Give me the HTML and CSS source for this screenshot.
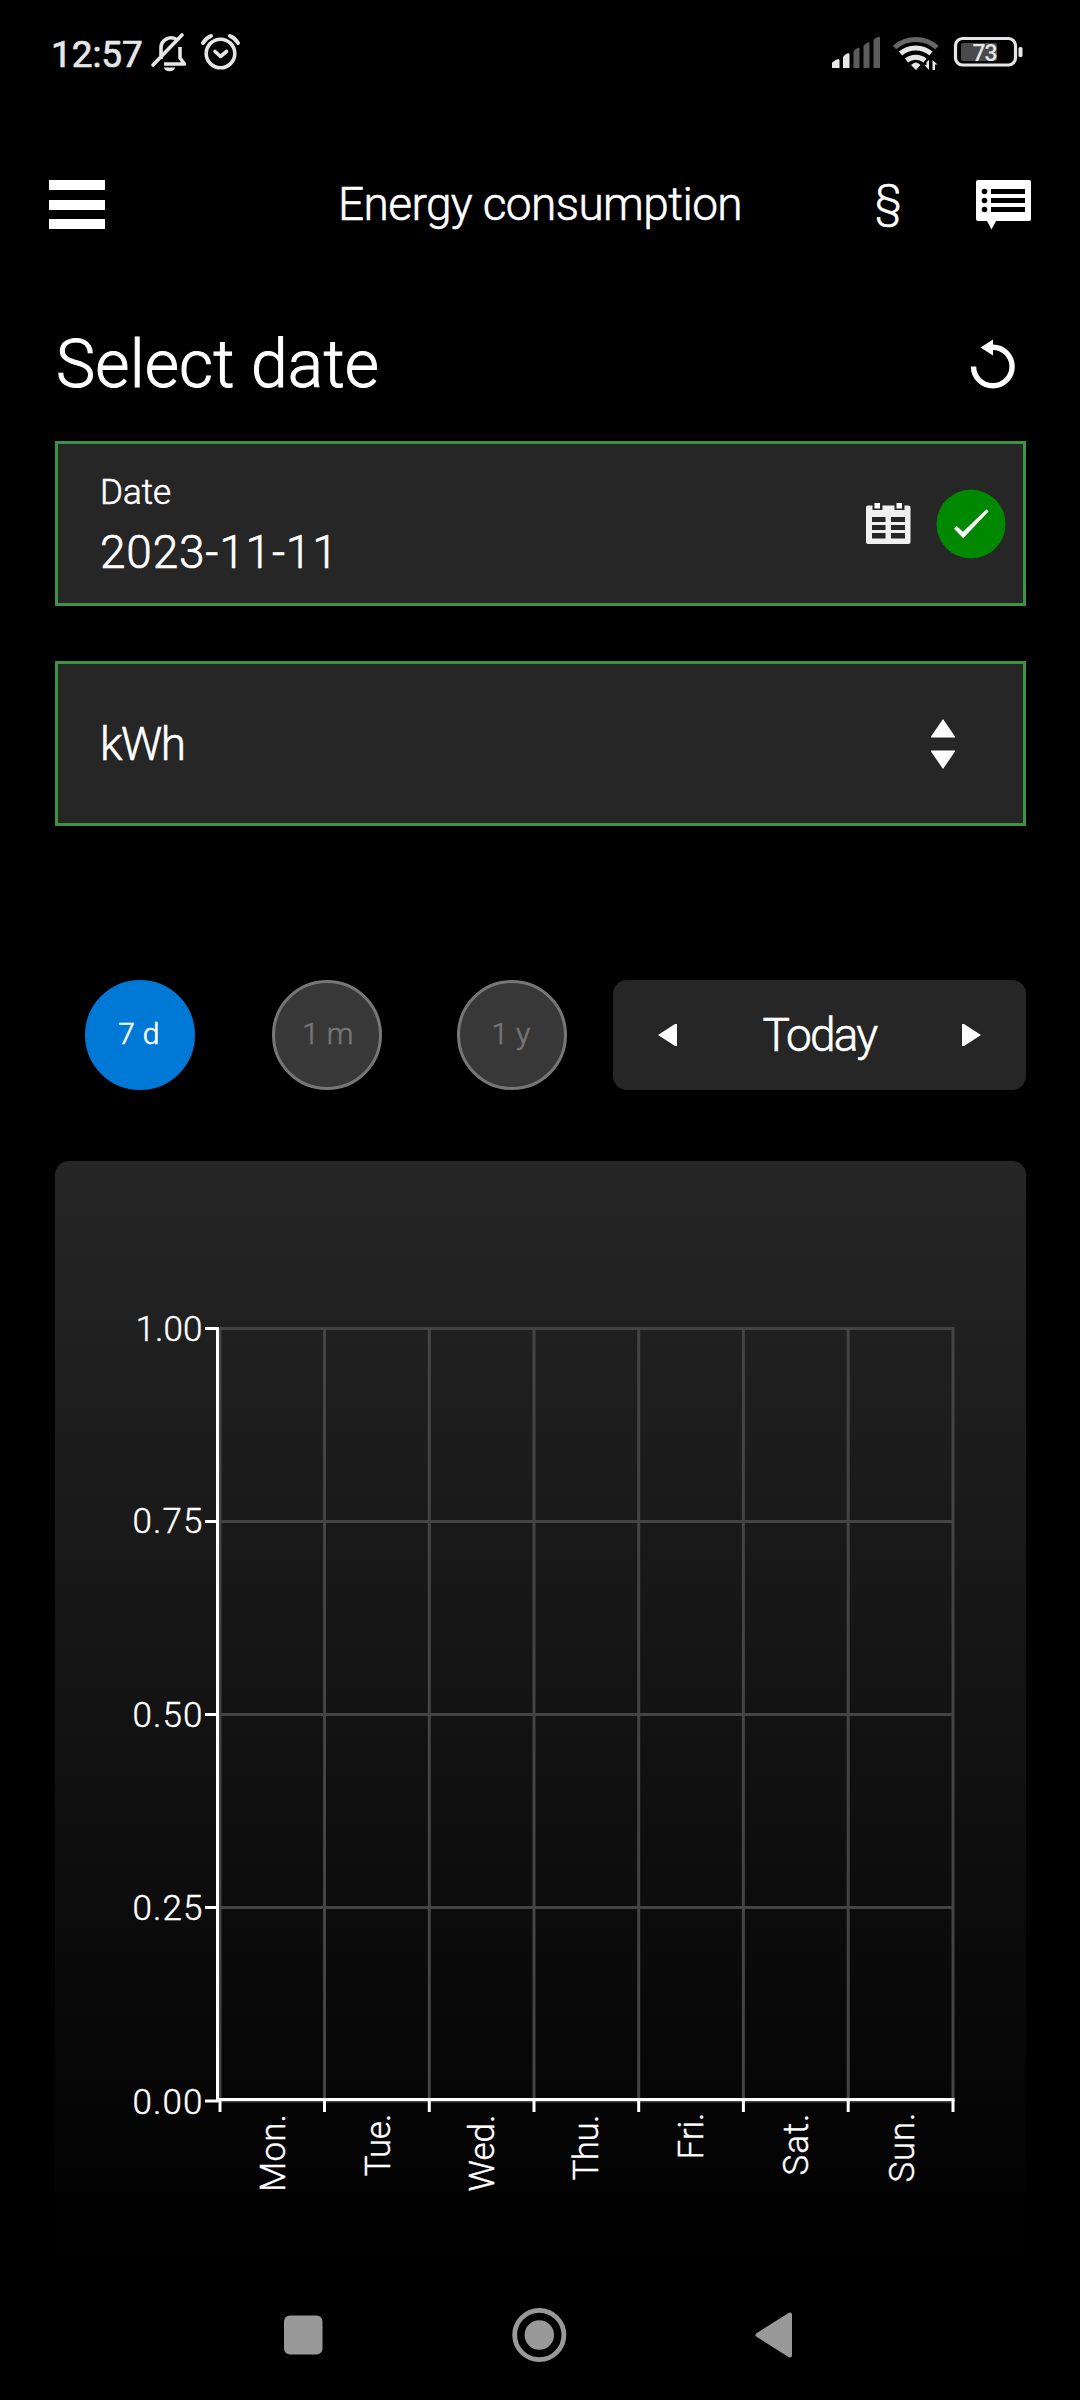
FILE: index.html
```
<!DOCTYPE html>
<html lang="en">
<head>
    <meta charset="UTF-8">
    <meta name="viewport" content="width=device-width, initial-scale=1.0">
    <title>Energy consumption</title>
    <link rel="stylesheet" href="styles.css">
</head>
<body>
    <div class="screen">
        <!-- status bar -->
        <div class="status-bar">
            <span class="clock">12:57</span>
            <svg class="status-left" width="92" height="44" viewBox="150 30 92 44" fill="none" stroke="#e6e6e6" stroke-width="3.6">
                <path d="M161 59V48a10 10 0 0 1 15.500-8.500M180 47v11l4.500 6H164" stroke-linejoin="round"/>
                <path d="M153 65L182 35" stroke-linecap="round"/>
                <path d="M164 67.500h11a5.500 3.800 0 0 1-11 0z" fill="#e6e6e6" stroke="none"/>
                <circle cx="220.500" cy="53.500" r="14.300"/>
                <path d="M203 43q3-5 8-7M238 43q-3-5-8-7" stroke-width="4" stroke-linecap="round"/>
                <path d="M215 51.500l5.500 5 6-5" stroke-linecap="round" stroke-linejoin="round"/>
            </svg>
            <svg class="status-right" width="194" height="44" viewBox="830 30 194 44">
                <path d="M832 63q0-1 4.500-3.500 3-1.500 3 1V68h-7.500zM843 57q1-2 4-3.500 2.500-1 2.500 1V68H843z" fill="#e6e6e6"/>
                <path d="M853.500 52q1-3 4-4 2-1 2 1V68h-6zM863.500 46q1-2 4-3.500 2-1 2 1V68h-6zM873.500 40q1-2 4.500-3 2-1 2 1V68h-6.500z" fill="#5c5c5c"/>
                <g fill="none" stroke="#e6e6e6" stroke-width="5">
                    <path d="M894.500 47.500a32 32 0 0 1 42.500 0" stroke="#666"/>
                    <path d="M900.500 53.500a24 24 0 0 1 30.500 0"/>
                    <path d="M906.500 60.500a15 15 0 0 1 18.500 0"/>
                </g>
                <path d="M911 65q5-5 9.500 0l-4.500 5zM929 60v10l-4.500-5h2v-3zM932.500 70V60l5 4.500h-2.500V70z" fill="#e6e6e6"/>
                <rect x="955.500" y="38.500" width="60" height="26.500" rx="7" fill="none" stroke="#e6e6e6" stroke-width="3.200"/>
                <rect x="1018.500" y="47" width="4" height="10" rx="1.500" fill="#e6e6e6"/>
                <rect x="961" y="43" width="36" height="18" rx="2" fill="#4a4a4a"/>
                <text class="battery" x="972.500" y="60.700" textLength="25">73</text>
            </svg>
        </div>

        <!-- app header -->
        <header class="header">
            <svg class="menu" width="56" height="50" viewBox="0 0 56 50" fill="#fff">
                <path d="M0 0h56v10H0zM0 20h56v10H0zM0 39h56v10H0z"/>
            </svg>
            <h1 class="title">Energy consumption</h1>
            <span class="legal">§</span>
            <svg class="chat" width="56" height="50" viewBox="976 180 56 50">
                <path d="M978 180h51q2 0 2 2v37q0 2-2 2H996l-4.500 8.500-4.500-8.500h-9q-2 0-2-2v-37q0-2 2-2z" fill="#fff"/>
                <g fill="#000">
                    <circle cx="984.500" cy="191.500" r="2.800"/>
                    <circle cx="984.500" cy="200.500" r="2.800"/>
                    <circle cx="984.500" cy="209.500" r="2.800"/>
                    <path d="M991 189h34v5h-34zM991 198h34v5h-34zM991 207h34v5h-34z"/>
                </g>
            </svg>
        </header>

        <main class="content">
            <div class="heading">
                <h2>Select date</h2>
                <svg width="46" height="50" viewBox="970 339 46 50">
                    <path d="M973.500 366.500a19.300 19.300 0 1 0 19.300-19.300" fill="none" stroke="#fff" stroke-width="5.400"/>
                    <path d="M980.500 347.500l12.500-8v16z" fill="#fff"/>
                </svg>
            </div>

            <div class="field date-field">
                <div class="field-text">
                    <label>Date</label>
                    <div class="value">2023-11-11</div>
                </div>
                <svg class="calendar" width="45" height="42" viewBox="866 503 45 42">
                    <path d="M868 505.500h4.500v4.500h10v-4.500h12v4.500h10v-4.500h4q2 0 2 2V542q0 2-2 2h-40.500q-2 0-2-2v-34.500q0-2 2-2z" fill="#f0f0f0"/>
                    <path d="M874.500 503h5.500v5.500h-5.500zM896.500 503h5.500v5.500h-5.500z" fill="#fff"/>
                    <path d="M872 517h13.500v5H872zM891 517h14v5h-14zM872 525h13.500v5H872zM891 525h14v5h-14zM872 533h13.500v5.500H872zM891 533h14v5.500h-14z" fill="#262626"/>
                </svg>
                <svg class="check" width="70" height="70" viewBox="935.500 488.500 70 70">
                    <circle cx="970.500" cy="523.500" r="34.500" fill="#080"/>
                    <path d="M953.500 528.300l2.500-2.800 6.500 5.800 23.500-22.500 2 2.200-25.300 26.800z" fill="#fff"/>
                </svg>
            </div>

            <div class="field unit-field">
                <div class="unit">kWh</div>
                <svg width="24" height="50" viewBox="0 0 24 50" fill="#fff">
                    <path d="M12 0l12 17.500v1H0v-1zM12 50l12-17.500v-1H0v1z"/>
                </svg>
            </div>

            <div class="controls">
                <button class="range active">7 d</button>
                <button class="range">1 m</button>
                <button class="range">1 y</button>
                <div class="period">
                    <svg width="19" height="22" viewBox="0 0 19 22" fill="#fff"><path d="M0 11L17 0h2v22h-2z"/></svg>
                    <span>Today</span>
                    <svg width="19" height="22" viewBox="0 0 19 22" fill="#fff"><path d="M19 11L2 0H0v22h2z"/></svg>
                </div>
            </div>

            <div class="panel">
                <svg width="971" height="1099" viewBox="55 1161 971 1099">
                    <path class="grid" d="M220 1328.500H954.500M220 1521.500H954.500M220 1714.500H954.500M220 1907.500H954.500M218 2101H954.500M220 1327V2101M324.500 1327V2101M429.300 1327V2101M534 1327V2101M638.700 1327V2101M743.400 1327V2101M848.200 1327V2101M953 1327V2101"/>
                    <path class="axis" d="M217.500 1327V2102M216 2099.500H954.500M205 1328.500h13M205 1521.500h13M205 1714.500h13M205 1907.500h13M205 2101h13"/>
                    <path class="tick" d="M220 2100v12M324.500 2100v12M429.300 2100v12M534 2100v12M638.700 2100v12M743.400 2100v12M848.200 2100v12M953 2100v12"/>
                    <g class="labels">
                        <text x="135.500" y="1340.500" textLength="67">1.00</text>
                        <text x="132.500" y="1533" textLength="70">0.75</text>
                        <text x="132.500" y="1727" textLength="70">0.50</text>
                        <text x="132.500" y="1920" textLength="70">0.25</text>
                        <text x="132.500" y="2113.500" textLength="70">0.00</text>
                    </g>
                    <g class="labels">
                        <text transform="translate(285 2192) rotate(-90)" textLength="78">Mon.</text>
                        <text transform="translate(390 2176.500) rotate(-90)" textLength="63">Tue.</text>
                        <text transform="translate(493.500 2191.500) rotate(-90)" textLength="77">Wed.</text>
                        <text transform="translate(598 2180.500) rotate(-90)" textLength="66">Thu.</text>
                        <text transform="translate(702.500 2159.500) rotate(-90)" textLength="47">Fri.</text>
                        <text transform="translate(807.500 2175.500) rotate(-90)" textLength="62">Sat.</text>
                        <text transform="translate(913.500 2182.500) rotate(-90)" textLength="70">Sun.</text>
                    </g>
                </svg>
            </div>
        </main>

        <!-- android navigation -->
        <nav class="nav-bar">
            <svg width="512" height="56" viewBox="283 2307 512 56" fill="#999">
                <rect x="284" y="2315.500" width="38.500" height="39" rx="6"/>
                <circle cx="539.300" cy="2335" r="24.600" fill="none" stroke="#999" stroke-width="4.800"/>
                <circle cx="539.300" cy="2335" r="14.700"/>
                <path d="M757.500 2335L790 2314.500v41z" stroke="#999" stroke-width="4" stroke-linejoin="round"/>
            </svg>
        </nav>
    </div>
</body>
</html>
```

FILE: styles.css
```
* {
    box-sizing: border-box;
}
body {
    margin: 0;
    background-color: #000;
    color: #fff;
    font-family: Roboto, "Liberation Sans", sans-serif;
    font-weight: 300;
    -webkit-text-stroke: 0.6px currentColor;
}
svg {
    display: block;
    flex: none;
}
.screen {
    width: 1080px;
    height: 2400px;
    overflow: hidden;
    display: flex;
    flex-direction: column;
}
.status-bar {
    height: 104px;
    padding: 30px 56px 0 51px;
    display: flex;
    align-items: flex-start;
}
.clock {
    width: 99px;
    padding-top: 1px;
    font-size: 37px;
    line-height: 48px;
    font-weight: 400;
    letter-spacing: -0.1px;
    color: #e6e6e6;
    -webkit-text-stroke: 0.7px #e6e6e6;
}
.status-right {
    margin-left: auto;
}
.battery {
    font-size: 23px;
    font-weight: 500;
    fill: #e6e6e6;
    -webkit-text-stroke: 0;
}
.header {
    height: 200px;
    padding: 76px 48px 0 49px;
    display: flex;
    align-items: flex-start;
}
.title {
    margin: -4px 0 0 233px;
    width: 537px;
    font-size: 46px;
    line-height: 56px;
    font-weight: 300;
    letter-spacing: -0.6px;
    white-space: nowrap;
}
.legal {
    width: 101px;
    margin-top: -7px;
    font-size: 44px;
    line-height: 56px;
}
.content {
    padding: 0 54px 0 55px;
}
.heading {
    height: 137px;
    padding: 35px 10px 0 1px;
    display: flex;
    justify-content: space-between;
}
h2 {
    margin: -12px 0 0;
    font-size: 66px;
    line-height: 76px;
    font-weight: 300;
    letter-spacing: 0.2px;
    -webkit-text-stroke: 1px #fff;
}
.field {
    height: 165px;
    border: 3px solid #3c9442;
    background-color: #262626;
    display: flex;
    align-items: center;
}
.date-field {
    padding: 0 17px 0 42px;
}
.field-text {
    flex: 1;
}
.field label {
    display: block;
    font-size: 35px;
    line-height: 48px;
}
.value {
    margin-top: 6px;
    padding-top: 2px;
    font-size: 46px;
    line-height: 54px;
    letter-spacing: 0.8px;
}
.calendar {
    margin-right: 25px;
}
.unit-field {
    margin-top: 55px;
    padding: 0 68px 0 42px;
    justify-content: space-between;
}
.unit {
    font-size: 46px;
    letter-spacing: -1.5px;
}
.controls {
    margin-top: 154px;
    padding-left: 30px;
    display: flex;
}
.range {
    width: 110px;
    height: 110px;
    padding: 0 2px 4px 0;
    margin-right: 75px;
    border: 3px solid #767676;
    border-radius: 50%;
    background-color: #383838;
    color: #767676;
    font-family: inherit;
    font-size: 30px;
    font-weight: 300;
    letter-spacing: 0.3px;
}
.range.active {
    margin-right: 77px;
    border-color: #0078d6;
    background-color: #0078d6;
    color: #fff;
}
.range:nth-child(2) {
    padding: 0 0 4px 2px;
}
.range:nth-child(3) {
    margin-right: 46px;
}
.period {
    width: 413px;
    height: 110px;
    padding: 0 45px 0 45px;
    border-radius: 14px;
    background-color: #262626;
    display: flex;
    align-items: center;
    justify-content: space-between;
    font-size: 46px;
    letter-spacing: -1.8px;
}
.panel {
    height: 1099px;
    margin-top: 71px;
    border-radius: 14px;
    background: linear-gradient(#262626, #000);
}
.grid {
    fill: none;
    stroke: #444;
    stroke-width: 3;
}
.axis, .tick {
    fill: none;
    stroke: #fff;
    stroke-width: 3;
}
.labels {
    font-size: 35px;
    fill: #fff;
    stroke: #fff;
    stroke-width: 0.4;
}
.nav-bar {
    margin-top: 47px;
    padding-left: 283px;
}
```
